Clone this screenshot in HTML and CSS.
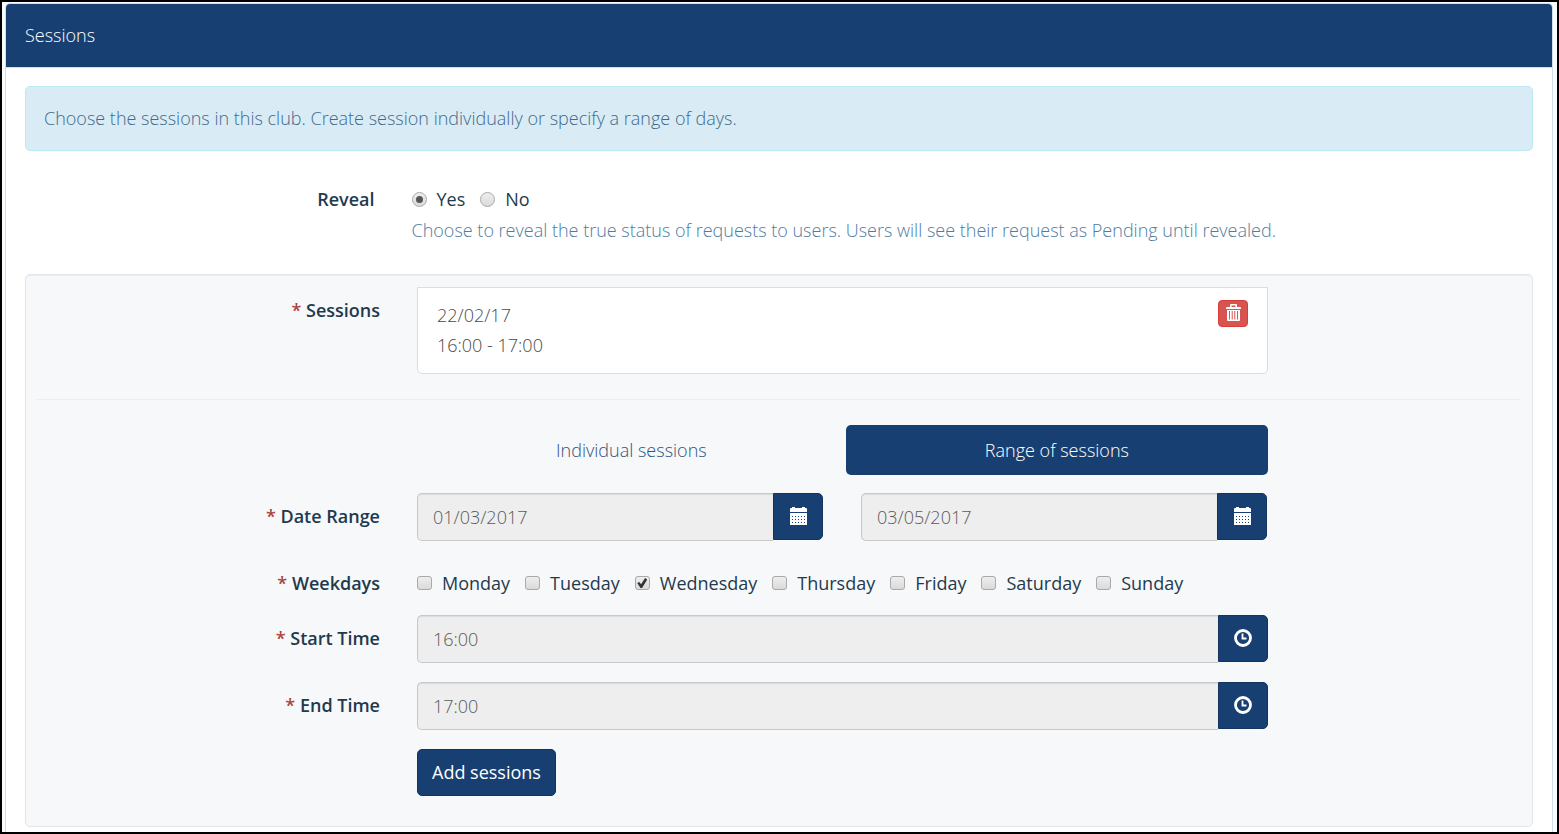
FILE: index.html
```html
<!DOCTYPE html>
<html lang="en">
<head>
<meta charset="utf-8">
<title>Sessions</title>
<link rel="stylesheet" href="styles.css">
</head>
<body>
<svg class="sprite" aria-hidden="true">
  <symbol id="i-calendar" viewBox="0 0 17 18">
    <path fill="currentColor" d="M0 2Q0 1 1 1H2V0H5V1H12V0H15V1H16Q17 1 17 2V5H0Z"/>
    <path fill="currentColor" fill-rule="evenodd" d="M0 6H17V18H0ZM2 9v1h1v-1zM5 9v1h1v-1zM8 9v1h1v-1zM11 9v1h1v-1zM14 9v1h1v-1zM2 12v1h1v-1zM5 12v1h1v-1zM8 12v1h1v-1zM11 12v1h1v-1zM14 12v1h1v-1zM2 15v1h1v-1zM5 15v1h1v-1zM8 15v1h1v-1zM11 15v1h1v-1zM14 15v1h1v-1z"/>
  </symbol>
  <symbol id="i-clock" viewBox="0 0 18 18">
    <circle cx="9" cy="9" r="7.5" fill="none" stroke="currentColor" stroke-width="2.8"/>
    <path d="M8.5 4.500V9.500H12.500" fill="none" stroke="currentColor" stroke-width="1.800"/>
  </symbol>
  <symbol id="i-trash" viewBox="0 0 15 17">
    <path fill="currentColor" fill-rule="evenodd" d="M4 3V1Q4 0 5 0H10Q11 0 11 1V3H14Q15 3 15 4V5H0V4Q0 3 1 3ZM5.5 1.5V3H9.5V1.5Z"/>
    <path fill="currentColor" fill-rule="evenodd" d="M1 6H14V16Q14 17 13 17H2Q1 17 1 16ZM3 7V15.5H4V7ZM5.700 7V15.500H6.700V7ZM8.300 7V15.500H9.300V7ZM11 7V15.500H12V7Z"/>
  </symbol>
</svg>
<main class="panel">
  <header class="panel-heading">Sessions</header>
  <form class="panel-body">
    <p class="alert">Choose the sessions in this club. Create session individually or specify a range of days.</p>

    <div class="row reveal" role="radiogroup" aria-labelledby="reveal-label">
      <div class="label" id="reveal-label">Reveal</div>
      <div class="field">
        <div class="options">
          <label class="option"><input type="radio" name="reveal" checked>Yes</label>
          <label class="option"><input type="radio" name="reveal">No</label>
        </div>
        <p class="help">Choose to reveal the true status of requests to users. Users will see their request as Pending until revealed.</p>
      </div>
    </div>

    <section class="well">
      <div class="row">
        <div class="label"><span class="required">*</span> Sessions</div>
        <div class="field">
          <ul class="session-list">
            <li class="session">
              <div>22/02/17<br>16:00 - 17:00</div>
              <button class="delete" type="button" aria-label="Delete session"><svg class="icon-trash"><use href="#i-trash"/></svg></button>
            </li>
          </ul>
        </div>
      </div>
      <hr class="divider">
      <div class="row tab-row">
        <nav class="field tabs">
          <a class="tab" href="#individual">Individual sessions</a>
          <a class="tab active" href="#range">Range of sessions</a>
        </nav>
      </div>
      <div class="row">
        <label class="label" for="from"><span class="required">*</span> Date Range</label>
        <div class="field date-range">
          <div class="input-group">
            <input class="control" id="from" type="text" value="01/03/2017" readonly>
            <button class="addon" type="button" aria-label="Pick start date"><svg class="icon-calendar"><use href="#i-calendar"/></svg></button>
          </div>
          <div class="input-group">
            <input class="control" type="text" value="03/05/2017" aria-label="End date" readonly>
            <button class="addon" type="button" aria-label="Pick end date"><svg class="icon-calendar"><use href="#i-calendar"/></svg></button>
          </div>
        </div>
      </div>
      <div class="row weekdays" role="group" aria-labelledby="weekdays-label">
        <div class="label" id="weekdays-label"><span class="required">*</span> Weekdays</div>
        <div class="field options">
          <label class="option"><input type="checkbox">Monday</label>
          <label class="option"><input type="checkbox">Tuesday</label>
          <label class="option"><input type="checkbox" checked>Wednesday</label>
          <label class="option"><input type="checkbox">Thursday</label>
          <label class="option"><input type="checkbox">Friday</label>
          <label class="option"><input type="checkbox">Saturday</label>
          <label class="option"><input type="checkbox">Sunday</label>
        </div>
      </div>
      <div class="row">
        <label class="label" for="start"><span class="required">*</span> Start Time</label>
        <div class="field">
          <div class="input-group">
            <input class="control" id="start" type="text" value="16:00" readonly>
            <button class="addon" type="button" aria-label="Pick start time"><svg class="icon-clock"><use href="#i-clock"/></svg></button>
          </div>
        </div>
      </div>
      <div class="row">
        <label class="label" for="end"><span class="required">*</span> End Time</label>
        <div class="field">
          <div class="input-group">
            <input class="control" id="end" type="text" value="17:00" readonly>
            <button class="addon" type="button" aria-label="Pick end time"><svg class="icon-clock"><use href="#i-clock"/></svg></button>
          </div>
        </div>
      </div>
      <div class="row">
        <div class="field"><button class="add" type="button">Add sessions</button></div>
      </div>
    </section>
  </form>
</main>
</body>
</html>
```
FILE: styles.css
```css
* {
  box-sizing: border-box;
}

body {
  margin: 0;
  min-height: 100vh;
  display: flex;
  flex-direction: column;
  padding: 1px 4px 0 3px;
  border: 2px solid #000;
  background: #f9fbfd;
  color: #4a4a4a;
  font: 300 18px/30px "Open Sans", "Noto Sans", sans-serif;
}

input,
button {
  font: inherit;
  color: inherit;
  margin: 0;
}

p,
ul {
  margin: 0;
  padding: 0;
  list-style: none;
}

.sprite {
  display: none;
}

.panel {
  flex: 1;
  border: 1px solid #cfdfee;
  border-bottom: 0;
  border-radius: 5px 5px 0 0;
  background: #fff;
}

.panel-heading {
  padding: 16px 19px 17px;
  border-bottom: 1px solid #cfdfee;
  border-radius: 4px 4px 0 0;
  background: #183f72;
  color: #fff;
}

.panel-body {
  padding: 18px 19px 5px;
}

.alert {
  padding: 16px 18px 17px;
  border: 1px solid #bce8f1;
  border-radius: 5px;
  background: #d9ecf5;
  color: #3f6a8d;
}

.row {
  display: grid;
  grid-template-columns: 3fr 7fr 2fr;
  margin: 0 -19px 19px;
}

.well .row {
  margin: 0 -20px 19px;
}

.label,
.field {
  min-width: 0;
  padding: 0 19px;
}

.label {
  padding-top: 8px;
  padding-right: 18px;
  color: #1f3a4d;
  font-weight: 600;
  text-align: right;
}

.required {
  color: #a94442;
}

.field {
  grid-column: 2;
}

.panel-body .reveal {
  margin-top: 25px;
  margin-bottom: 29px;
}

.options {
  display: flex;
  flex-wrap: wrap;
  gap: 0 15px;
  padding-top: 8px;
  color: #1f3a4d;
  font-weight: 400;
}

.option {
  display: flex;
  align-items: center;
  gap: 10px;
}

.option input {
  appearance: none;
  display: grid;
  place-items: center;
  width: 15px;
  height: 15px;
  border: 1px solid #a9a9a9;
  background: linear-gradient(#eee, #dadada);
}

.option input[type="radio"] {
  border-radius: 50%;
}

.option input[type="checkbox"] {
  height: 14px;
  border-radius: 3px;
}

.option input:checked::before {
  content: "";
  background: #555;
}

.option input[type="radio"]:checked::before {
  width: 7px;
  height: 7px;
  border-radius: 50%;
}

.option input[type="checkbox"]:checked::before {
  width: 10px;
  height: 10px;
  background: #333;
  clip-path: polygon(0 50%, 20% 40%, 38% 62%, 78% 0, 100% 14%, 48% 100%, 32% 100%);
}

.help {
  margin-right: -19px;
  padding-top: 1px;
  color: #4f7ca2;
}

.well {
  padding: 12px 11px 11px;
  border: 1px solid #dfe7ee;
  border-radius: 5px;
  background: #f7f8fa;
  box-shadow: inset 0 1px 1px rgba(0, 0, 0, 0.05);
}

.session {
  display: flex;
  justify-content: space-between;
  align-items: flex-start;
  padding: 12px 19px 13px;
  border: 1px solid #d5dfe8;
  border-radius: 0 0 5px 5px;
  background: #fff;
}

.delete {
  display: flex;
  align-items: center;
  justify-content: center;
  width: 30px;
  height: 27px;
  padding: 0 0 2px;
  border: 1px solid #d43f3a;
  border-radius: 4px;
  background: #d9534f;
  color: #fff;
}

.icon-trash {
  width: 15px;
  height: 17px;
}

.icon-calendar {
  width: 17px;
  height: 18px;
}

.icon-clock {
  width: 18px;
  height: 18px;
}

.divider {
  height: 1px;
  margin: 25px 0;
  border: 0;
  background: #ebedf0;
}

.well .tab-row {
  margin-bottom: 18px;
}

.tabs {
  display: flex;
}

.tab {
  flex: 1 1 auto;
  padding: 10px 0;
  border-radius: 5px;
  color: #31537a;
  text-align: center;
  text-decoration: none;
}

.tab.active {
  background: #183f72;
  color: #fff;
}

.date-range {
  display: grid;
  grid-template-columns: 1fr 1fr;
  gap: 38px;
  padding-right: 20px;
}

.input-group {
  display: flex;
}

.control {
  flex: 1;
  min-width: 0;
  height: 48px;
  padding: 0 15px;
  border: 1px solid #c8c8c8;
  border-right: 0;
  border-radius: 5px 0 0 5px;
  background: #eee;
  box-shadow: inset 0 1px 1px rgba(0, 0, 0, 0.08);
  color: #5a5a5a;
}

.addon {
  display: flex;
  align-items: center;
  justify-content: center;
  width: 50px;
  height: 47px;
  padding: 0 0 2px;
  border: 1px solid #14345f;
  border-radius: 0 5px 5px 0;
  background: #183f72;
  color: #fff;
}

.well .weekdays {
  margin-bottom: 17px;
}

.add {
  display: block;
  height: 47px;
  padding: 0 14px 2px;
  border: 1px solid #14345f;
  border-radius: 5px;
  background: #183f72;
  color: #fff;
  font-weight: 400;
}
```
